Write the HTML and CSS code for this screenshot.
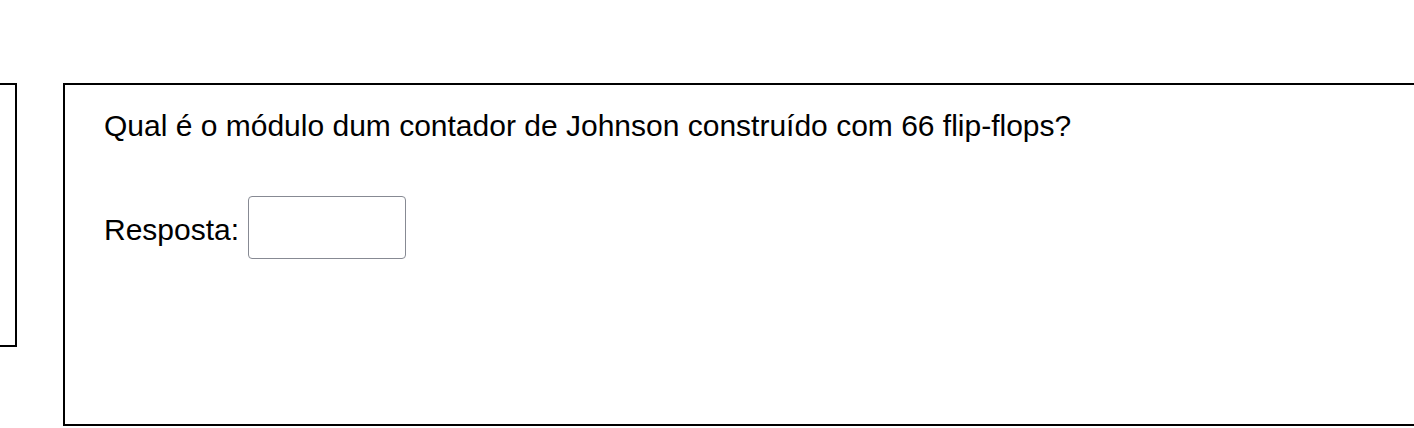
FILE: index.html
```html
<!DOCTYPE html>
<html lang="pt">
<head>
<meta charset="utf-8">
<title>Pergunta</title>
<link rel="stylesheet" href="styles.css">
</head>
<body>
<div class="page">
  <div class="card card-prev"></div>
  <div class="card card-main">
    <p class="question">Qual é o módulo dum contador de Johnson construído com 66 flip-flops?</p>
    <div class="answer">
      <label class="answer-label" for="resp">Resposta:</label>
      <input class="answer-input" id="resp" type="text">
    </div>
  </div>
</div>
</body>
</html>
```

FILE: styles.css
```css
html, body {
  margin: 0;
  padding: 0;
  background: #ffffff;
  overflow: hidden;
}
body {
  font-family: "Liberation Sans", Arial, Helvetica, sans-serif;
  font-size: 30px;
  color: #000000;
}
.page {
  display: flex;
  align-items: flex-start;
  padding-top: 83px;
}
.card {
  flex: none;
  border: 2px solid #000000;
  box-sizing: border-box;
  background: #ffffff;
}
.card-prev {
  width: 117px;
  height: 264px;
  margin-left: -100px;
}
.card-main {
  width: 1400px;
  height: 343px;
  margin-left: 46px;
  padding: 24px 39px 0;
}
.question {
  margin: 0;
  line-height: 34px;
}
.answer {
  display: flex;
  align-items: flex-start;
  gap: 9px;
  margin-top: 53px;
}
.answer-label {
  line-height: 34px;
  margin-top: 17px;
}
.answer-input {
  box-sizing: border-box;
  width: 158px;
  height: 63px;
  border: 1.5px solid #878a93;
  border-radius: 4px;
  padding: 0 8px;
  font: inherit;
  background: #ffffff;
}
```
